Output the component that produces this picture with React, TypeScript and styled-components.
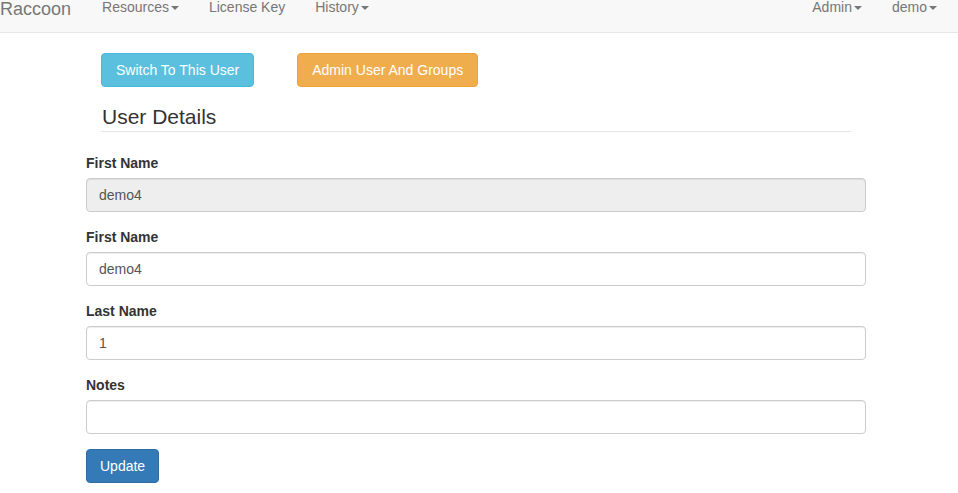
import React from 'react';
import styled, { createGlobalStyle } from 'styled-components';

const GlobalStyle = createGlobalStyle`
  html, body {
    margin: 0;
    padding: 0;
    background: #fff;
    font-family: "Liberation Sans", Arial, Helvetica, sans-serif;
    font-size: 14px;
    color: #333;
  }
  * { box-sizing: border-box; }
`;

const Navbar = styled.nav`
  height: 33px;
  background: #f8f8f8;
  border-bottom: 1px solid #e7e7e7;
  display: flex;
  justify-content: space-between;
  align-items: flex-start;
`;

const NavGroup = styled.ul<{ $right?: boolean }>`
  display: flex;
  align-items: flex-start;
  margin: 0;
  padding: 0 ${p => (p.$right ? '6px' : '0')} 0 0;
  list-style: none;
`;

const Brand = styled.a`
  font-size: 18px;
  line-height: 19px;
  color: #777;
  padding-right: 16px;
  text-decoration: none;
`;

const NavLink = styled.li`
  font-size: 14px;
  line-height: 15px;
  color: #777;
  padding: 0 15px;
  display: flex;
  align-items: center;
`;

const Caret = styled.span`
  display: inline-block;
  width: 0;
  height: 0;
  margin-left: 2px;
  margin-top: 1px;
  border-top: 4px solid #777;
  border-left: 4px solid transparent;
  border-right: 4px solid transparent;
`;

const Container = styled.div`
  width: 780px;
  margin-left: 86px;
  padding-top: 20px;
`;

const Actions = styled.div`
  display: flex;
  gap: 43px;
  padding-left: 15px;
`;

const Button = styled.button<{ $bg: string; $border: string }>`
  font-family: inherit;
  font-size: 14px;
  line-height: 20px;
  height: 34px;
  padding: 6px 14px;
  color: #fff;
  background: ${p => p.$bg};
  border: 1px solid ${p => p.$border};
  border-radius: 4px;
  cursor: pointer;
`;

const UpdateButton = styled(Button)`
  padding: 6px 13px;
`;

const Legend = styled.div`
  width: 750px;
  margin: 15px 0 21px 15px;
  font-size: 21px;
  line-height: 29px;
  color: #333;
  padding-left: 1px;
  border-bottom: 1px solid #e5e5e5;
`;

const FormGroup = styled.div`
  margin-bottom: 15px;
`;

const Label = styled.label`
  display: block;
  font-weight: bold;
  font-size: 14px;
  line-height: 20px;
  margin-bottom: 5px;
  color: #333;
`;

const Input = styled.input<{ $readOnly?: boolean }>`
  display: block;
  width: 100%;
  height: 34px;
  padding: 6px 12px;
  font-family: inherit;
  font-size: 14px;
  line-height: 20px;
  color: #555;
  background: ${p => (p.$readOnly ? '#eee' : '#fff')};
  border: 1px solid #ccc;
  border-radius: 4px;
  box-shadow: inset 0 1px 1px rgba(0, 0, 0, 0.075);
  outline: none;
`;

const fields = [
  { label: 'First Name', value: 'demo4', readOnly: true },
  { label: 'First Name', value: 'demo4' },
  { label: 'Last Name', value: '1' },
  { label: 'Notes', value: '' },
];

const App: React.FC = () => (
  <>
    <GlobalStyle />
    <Navbar>
      <NavGroup>
        <Brand>Raccoon</Brand>
        <NavLink>
          Resources<Caret />
        </NavLink>
        <NavLink>License Key</NavLink>
        <NavLink>
          History<Caret />
        </NavLink>
      </NavGroup>
      <NavGroup $right>
        <NavLink>
          Admin<Caret />
        </NavLink>
        <NavLink>
          demo<Caret />
        </NavLink>
      </NavGroup>
    </Navbar>
    <Container>
      <Actions>
        <Button $bg="#5bc0de" $border="#46b8da">Switch To This User</Button>
        <Button $bg="#f0ad4e" $border="#eea236">Admin User And Groups</Button>
      </Actions>
      <Legend>User Details</Legend>
      {fields.map((f, i) => (
        <FormGroup key={i}>
          <Label>{f.label}</Label>
          <Input defaultValue={f.value} readOnly={f.readOnly} $readOnly={f.readOnly} />
        </FormGroup>
      ))}
      <UpdateButton $bg="#337ab7" $border="#2e6da4">Update</UpdateButton>
    </Container>
  </>
);

export default App;
